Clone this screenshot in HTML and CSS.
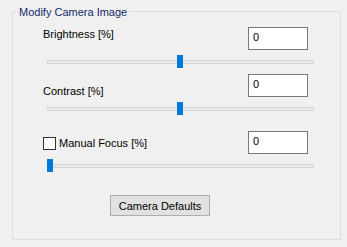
FILE: index.html
```html
<!DOCTYPE html>
<html>
<head>
<meta charset="utf-8">
<link rel="stylesheet" href="styles.css">
</head>
<body>
<div class="group">
  <div class="group-title">Modify Camera Image</div>
  <div class="group-body">
    <div class="section section-1">
      <div class="row">
        <span class="label label-1">Brightness [%]</span>
        <div class="textbox">0</div>
      </div>
      <div class="slider"><div class="track"></div><div class="thumb" style="left:130px"></div></div>
    </div>
    <div class="section section-2">
      <div class="row">
        <span class="label label-2">Contrast [%]</span>
        <div class="textbox">0</div>
      </div>
      <div class="slider"><div class="track"></div><div class="thumb" style="left:130px"></div></div>
    </div>
    <div class="section section-3">
      <div class="row">
        <label class="check label-3"><span class="checkbox"></span><span>Manual Focus [%]</span></label>
        <div class="textbox">0</div>
      </div>
      <div class="slider"><div class="track"></div><div class="thumb" style="left:0px"></div></div>
    </div>
    <button class="button">Camera Defaults</button>
  </div>
</div>
</body>
</html>
```

FILE: styles.css
```css
html, body {
  margin: 0;
  padding: 0;
  background: #f0f0f0;
}
body {
  font-family: "Liberation Sans", Arial, sans-serif;
  font-size: 11px;
  line-height: 16px;
  color: #000;
}
.group {
  box-sizing: border-box;
  width: 329px;
  height: 229px;
  margin: 11px 0 0 12px;
  border: 1px solid #dcdcdc;
}
.group-title {
  display: table;
  margin: -8px 0 0 4px;
  padding: 0 2px;
  background: #f0f0f0;
  color: #12286a;
}
.group-body {
  padding: 0 32px 0 30px;
}
.section-1 { margin-top: 7px; }
.section-2 { margin-top: 6px; }
.section-3 { margin-top: 16px; }
.row {
  display: flex;
  justify-content: space-between;
  align-items: flex-start;
  height: 23px;
}
.label-1 { margin-top: -1px; }
.label-2 { margin-top: 9px; }
.label-3 { margin-top: 4px; }
.check {
  display: flex;
  align-items: center;
  gap: 3px;
}
.checkbox {
  box-sizing: border-box;
  width: 13px;
  height: 13px;
  border: 1px solid #333;
  background: #fff;
}
.textbox {
  box-sizing: border-box;
  width: 60px;
  height: 23px;
  border: 1px solid #7a7a7a;
  background: #fff;
  padding: 1px 0 0 4px;
}
.slider {
  position: relative;
  height: 13px;
  margin: 5px -6px 0 4px;
  padding-top: 5px;
  box-sizing: border-box;
}
.track {
  box-sizing: border-box;
  height: 4px;
  border: 1px solid #d6d6d6;
  background: #e7eaea;
}
.thumb {
  position: absolute;
  top: 0;
  width: 6px;
  height: 13px;
  background: #0078d7;
}
.button {
  display: block;
  box-sizing: border-box;
  width: 100px;
  height: 21px;
  margin: 23px 0 0 67px;
  padding: 0;
  border: 1px solid #adadad;
  background: #e1e1e1;
  font: inherit;
  color: #000;
}
```
